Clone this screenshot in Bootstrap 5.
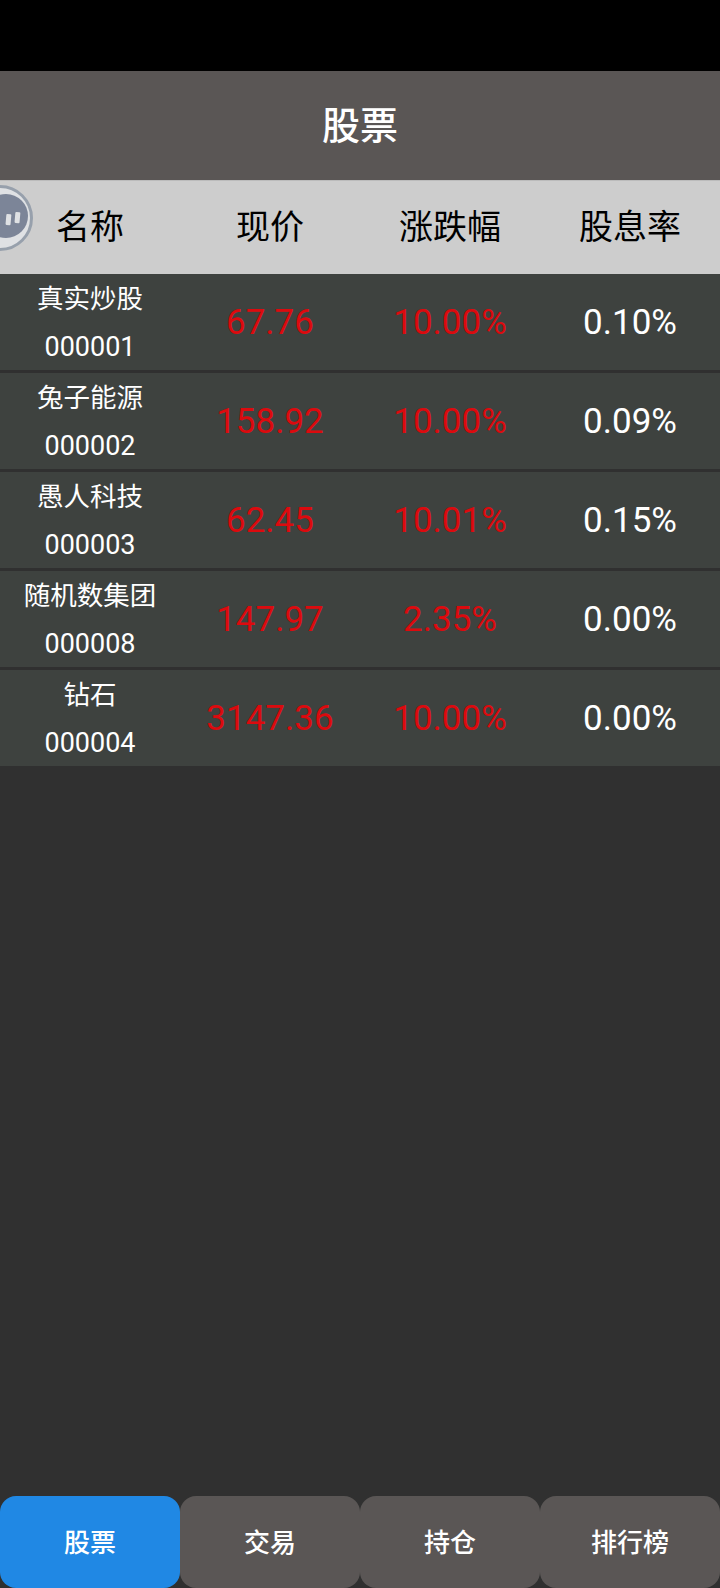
<!DOCTYPE html>
<html lang="zh">
<head>
  <meta charset="UTF-8">
  <meta name="viewport" content="width=device-width, initial-scale=1">
  <title>股票</title>
  <link href="https://cdn.jsdelivr.net/npm/bootstrap@5.3.0/dist/css/bootstrap.min.css" rel="stylesheet">
  <style>
    body { background: #000; font-family: Roboto, "Noto Sans CJK SC", sans-serif; }
    .phone { height: 1588px; padding-top: 71px; position: relative; overflow: hidden; }
    .screen { background: #303030; }
    .title-bar { height: 109px; padding-top: 2px; background: #5a5655; color: #fff; font-size: 38px; font-weight: 500; }
    .head-row { height: 94px; background: #cdcdcd; color: #000; font-size: 34px; border-top: 1px solid #bbb; }
    .head-row > div, .stock-row > div { width: 25%; text-align: center; }
    .stock-row { height: 96px; background: #3e423f; margin-bottom: 3px; color: #fff; font-size: 35px; }
    .stock-row > .stock-val { padding-top: 3px; }
    .stock-name { font-size: 26.5px; line-height: 48px; padding-top: 1px; }
    .stock-code { font-size: 27px; }
    .price-up { color: #dc0a0e; }
    .tab-bar { height: 92px; }
    .tab-item { width: 25%; padding-top: 2px; background: #5a5655; color: #fff; font-size: 26px; font-weight: 500; border-radius: 16px; }
    .tab-item.on { background: #2088e4; }
    .float-ball { position: absolute; left: -33px; top: 185px; width: 66px; height: 66px; }
  </style>
</head>
<body>
  <div class="phone d-flex flex-column">
    <div class="screen d-flex flex-column flex-grow-1">
      <div class="title-bar d-flex align-items-center justify-content-center">股票</div>
      <div class="head-row d-flex align-items-center">
        <div>名称</div>
        <div>现价</div>
        <div>涨跌幅</div>
        <div>股息率</div>
      </div>
      <div id="stock-list" class="flex-grow-1"></div>
      <div class="tab-bar d-flex">
        <div class="tab-item on d-flex align-items-center justify-content-center">股票</div>
        <div class="tab-item d-flex align-items-center justify-content-center">交易</div>
        <div class="tab-item d-flex align-items-center justify-content-center">持仓</div>
        <div class="tab-item d-flex align-items-center justify-content-center">排行榜</div>
      </div>
    </div>
    <svg class="float-ball" viewBox="0 0 66 66">
      <circle cx="33" cy="33" r="31.5" fill="#dfe1e4" stroke="#97a0ac" stroke-width="3"/>
      <circle cx="39" cy="31" r="22" fill="#7c8598"/>
      <rect x="39" y="29" width="5" height="11" rx="1" fill="#dfe1e4" transform="rotate(5 41 34)"/>
      <rect x="48" y="27" width="5" height="11" rx="1" fill="#dfe1e4" transform="rotate(5 50 32)"/>
    </svg>
  </div>
  <script>
    const acciones = [
      ["真实炒股", "000001", "67.76", "10.00%", "0.10%"],
      ["兔子能源", "000002", "158.92", "10.00%", "0.09%"],
      ["愚人科技", "000003", "62.45", "10.01%", "0.15%"],
      ["随机数集团", "000008", "147.97", "2.35%", "0.00%"],
      ["钻石", "000004", "3147.36", "10.00%", "0.00%"]
    ];
    const lista = document.getElementById("stock-list");
    acciones.forEach(a => {
      const fila = document.createElement("div");
      fila.className = "stock-row d-flex align-items-center";
      fila.innerHTML = `
        <div class="stock-name"><div>${a[0]}</div><div class="stock-code">${a[1]}</div></div>
        <div class="stock-val price-up">${a[2]}</div>
        <div class="stock-val price-up">${a[3]}</div>
        <div class="stock-val">${a[4]}</div>
      `;
      lista.appendChild(fila);
    });
  </script>
  <script src="https://cdn.jsdelivr.net/npm/bootstrap@5.3.0/dist/js/bootstrap.bundle.min.js"></script>
</body>
</html>
